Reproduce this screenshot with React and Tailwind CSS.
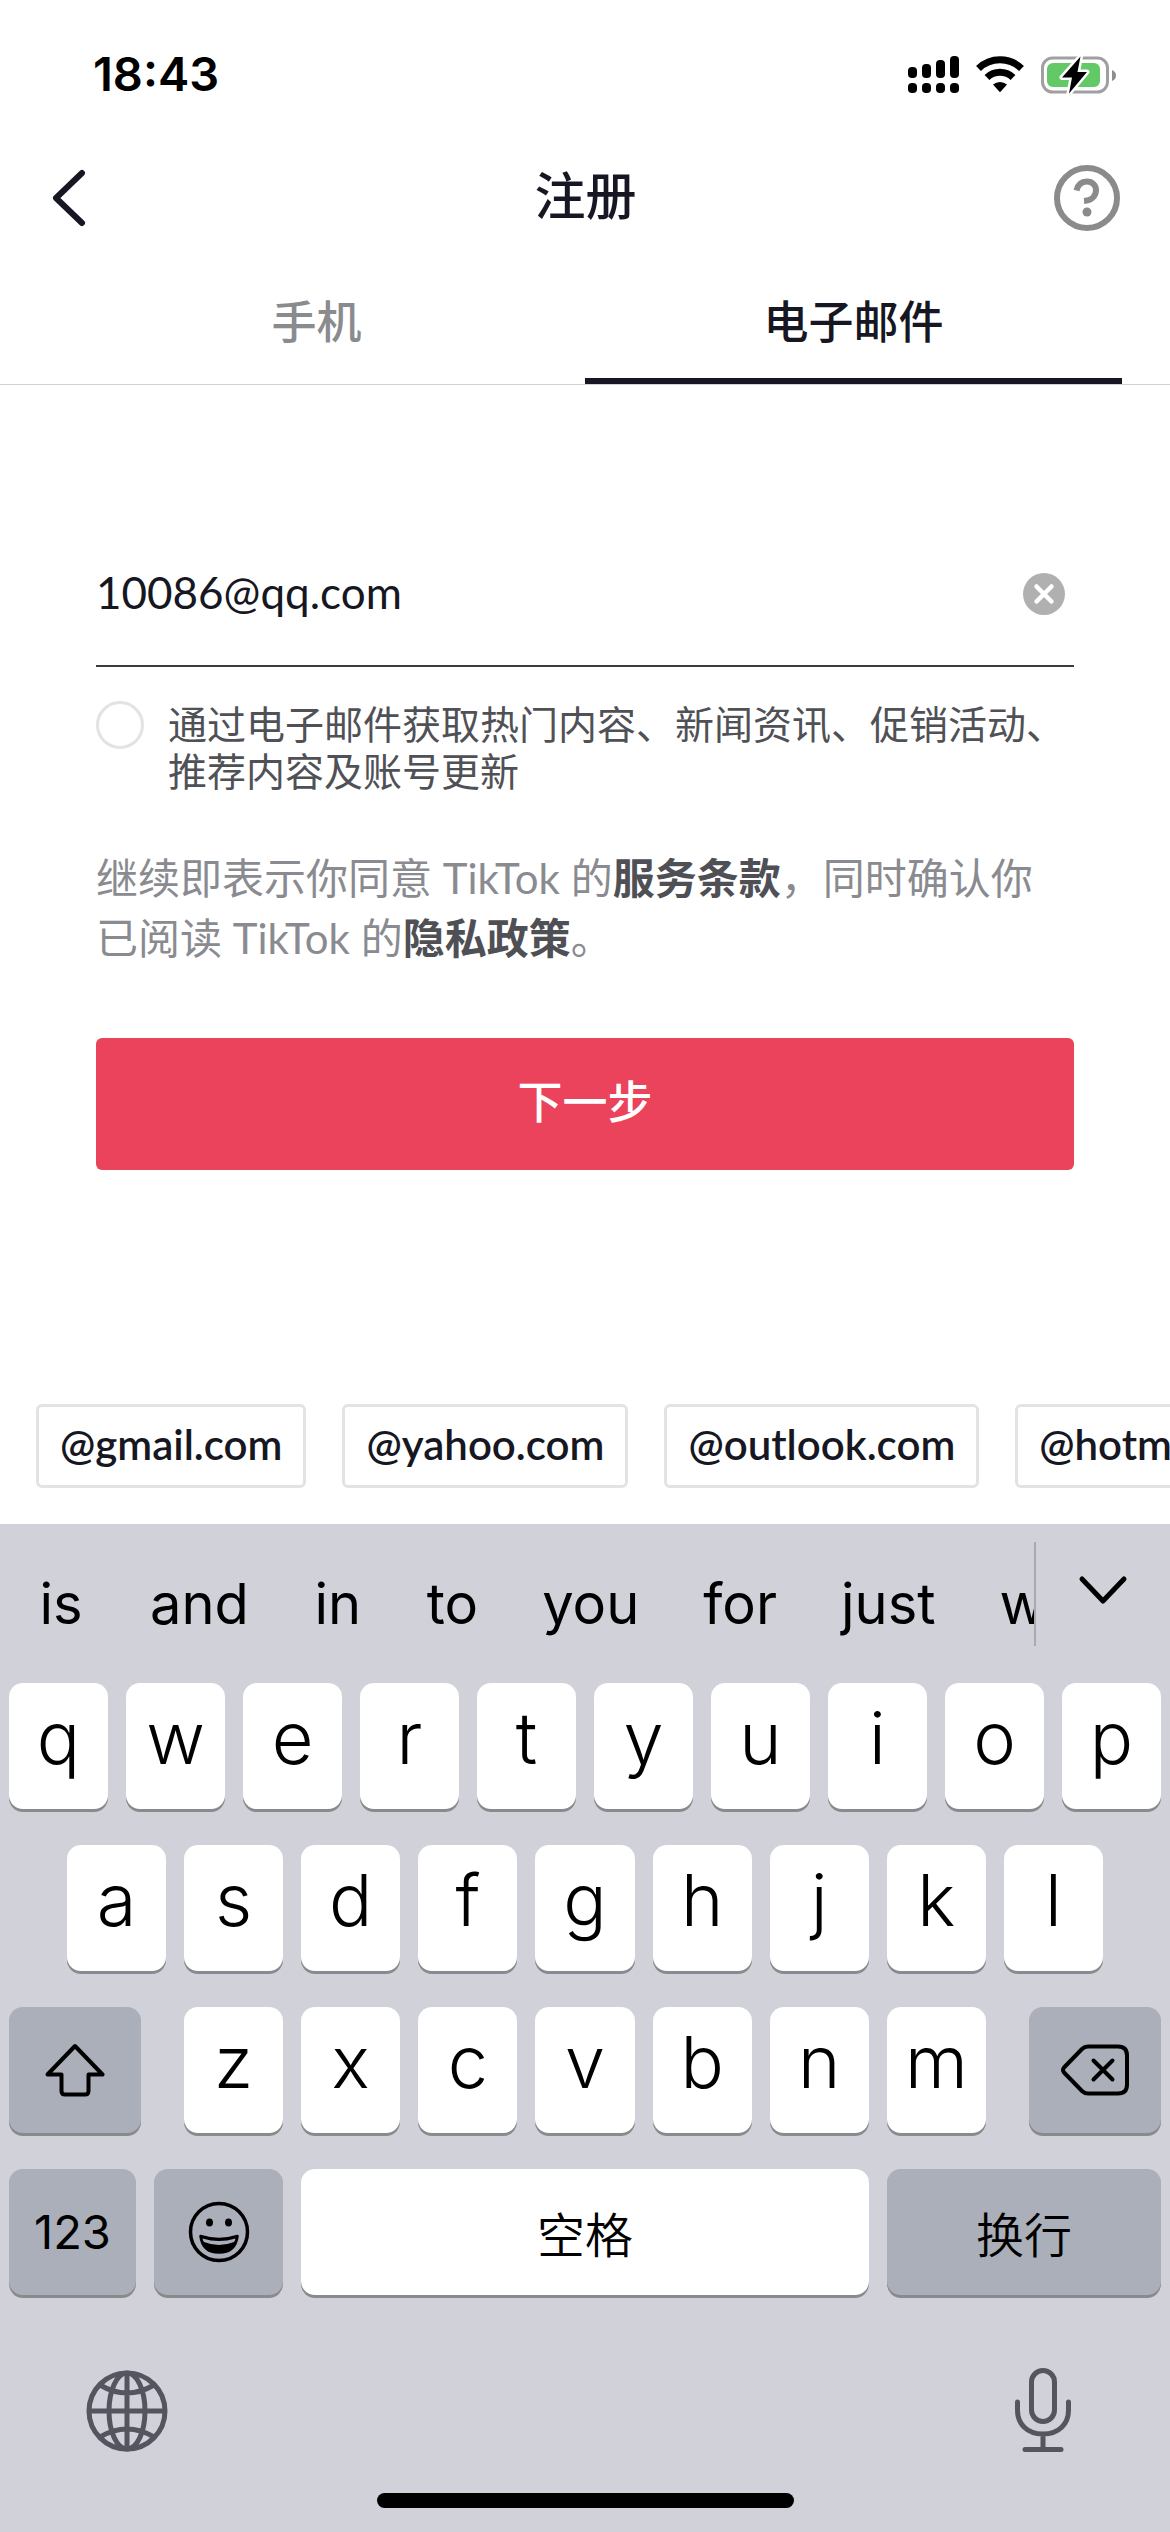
import { useState } from "react";

const SUGGESTIONS = ["is", "and", "in", "to", "you", "for", "just", "with"];
const DOMAINS = ["@gmail.com", "@yahoo.com", "@outlook.com", "@hotmail.com"];

function StatusBar() {
  return (
    <div className="flex h-[138px] items-center justify-between pt-3 pr-[53px] pl-[93px]">
      <span className="pb-[3px] font-['Inter',sans-serif] text-[47px] leading-none font-semibold text-black">18:43</span>
      <div className="flex items-center gap-[17px]">
        <svg className="h-[38px] w-[51px]" viewBox="0 0 51 38" aria-hidden="true">
          <rect x="0" y="11" width="9" height="11" rx="4" />
          <rect x="14" y="8" width="9" height="14" rx="4" />
          <rect x="28" y="4" width="9" height="18" rx="4" />
          <rect x="42" y="0" width="9" height="22" rx="4" />
          <rect x="0" y="27" width="9" height="10" rx="4" />
          <rect x="14" y="27" width="9" height="10" rx="4" />
          <rect x="28" y="27" width="9" height="10" rx="4" />
          <rect x="42" y="27" width="9" height="10" rx="4" />
        </svg>
        <svg className="h-[38px] w-[48px]" viewBox="0 0 48 38" aria-hidden="true">
          <g fill="none" stroke="#000" strokeWidth="7">
            <path d="M2.500 12.500 A31 31 0 0 1 45.500 12.500" />
            <path d="M11 21.500 A19 19 0 0 1 37 21.500" />
          </g>
          <path d="M17 28.500 A11 11 0 0 1 31 28.500 L24.800 35.500 Q24 36.300 23.200 35.500 Z" />
        </svg>
        <svg className="h-[38px] w-[76px]" viewBox="0 0 76 38" aria-hidden="true">
          <rect x="1.500" y="2" width="65" height="34" rx="10" fill="none" stroke="#a0a0a3" strokeWidth="3" />
          <path d="M71 14 Q75 15.500 75 19.500 Q75 23.500 71 25 Z" fill="#8e8e92" />
          <rect x="6" y="7" width="53" height="24" rx="6" fill="#62c966" />
          <path d="M39.500 0.500 L21 21.500 H31 L28 37.500 L46 16 H36.500 Z" fill="#000" stroke="#fff" strokeWidth="5" strokeLinejoin="round" paintOrder="stroke" />
        </svg>
      </div>
    </div>
  );
}

function Header() {
  return (
    <header className="flex h-[120px] items-center justify-between pr-[50px] pl-[51px]">
      <button type="button" aria-label="返回" className="flex w-[66px] items-center">
        <svg className="h-[58px] w-[36px]" viewBox="0 0 36 58" fill="none" stroke="#161722" strokeWidth="6" strokeLinecap="round" strokeLinejoin="round">
          <path d="M31 4 L5 29 L31 54" />
        </svg>
      </button>
      <h1 className="pb-[5px] text-[51px] leading-none font-medium">注册</h1>
      <button type="button" aria-label="帮助">
        <svg className="h-[66px] w-[66px]" viewBox="0 0 66 66" fill="none" stroke="#8a8b8d" strokeWidth="6">
          <circle cx="33" cy="33" r="30" />
          <path d="M22.500 25.500 C24 18.500 28.500 16.500 33 16.500 C38.500 16.500 42 20.500 42 25 C42 31 37.500 35.500 30 36 " />
          <circle cx="33" cy="47" r="4.500" fill="#8a8b8d" stroke="none" />
        </svg>
      </button>
    </header>
  );
}

function Tabs() {
  const base = "flex h-[126px] flex-1 items-center justify-center border-b-[6px] pt-2 text-[45px] leading-none font-medium";
  return (
    <div role="tablist" className="flex border-b border-[#d0d1d3] px-12">
      <button type="button" role="tab" aria-selected="false" className={base + " border-transparent text-[#8a8b8e]"}>手机</button>
      <button type="button" role="tab" aria-selected="true" className={base + " border-[#161722]"}>电子邮件</button>
    </div>
  );
}

function SignUpForm() {
  const [email, setEmail] = useState("10086@qq.com");
  return (
    <form className="px-24 pt-[138px]" onSubmit={(e) => e.preventDefault()}>
      <div className="flex h-[144px] items-center border-b-2 border-[#3b3c40] pr-2">
        <input
          type="text"
          aria-label="电子邮件"
          value={email}
          onChange={(e) => setEmail(e.target.value)}
          className="min-w-0 flex-1 bg-transparent pb-1 text-[44px] outline-none"
        />
        <button type="button" aria-label="清除" onClick={() => setEmail("")}>
          <svg className="h-[44px] w-[44px]" viewBox="0 0 44 44">
            <circle cx="22" cy="22" r="21" fill="#b0b0b1" />
            <path d="M14.500 14.500 L29.500 29.500 M29.500 14.500 L14.500 29.500" stroke="#fff" strokeWidth="4.500" strokeLinecap="round" />
          </svg>
        </button>
      </div>
      <label className="mt-[34px] flex items-start gap-6 text-[39px] leading-[47px] text-[#505156]">
        <input type="checkbox" className="size-12 shrink-0 appearance-none rounded-full border-[3px] border-[#e3e3e4] checked:bg-[#ea435b]" />
        <span>通过电子邮件获取热门内容、新闻资讯、促销活动、推荐内容及账号更新</span>
      </label>
      <p className="mt-[53px] pr-2 text-[42px] leading-[60px] text-[#8a8b90]">
        继续即表示你同意 TikTok 的<a href="#terms" className="font-bold text-[#4f5055]">服务条款</a>，同时确认你<br />
        已阅读 TikTok 的<a href="#privacy" className="font-bold text-[#4f5055]">隐私政策</a>。
      </p>
      <button type="submit" className="mt-[70px] h-[132px] w-full rounded-md bg-[#ea435b] pb-[2px] text-[45px] font-medium text-white">下一步</button>
    </form>
  );
}

function DomainChips() {
  return (
    <div className="mt-auto flex gap-9 overflow-hidden pb-9 pl-9">
      {DOMAINS.map((d) => (
        <button key={d} type="button" className="h-[84px] shrink-0 rounded-md border-[3px] border-[#e3e3e4] px-[21px] pb-1 text-[42px] font-semibold">{d}</button>
      ))}
    </div>
  );
}

function Key({ className, children, ...rest }) {
  return (
    <button type="button" className={"flex h-[126px] items-center justify-center rounded-[14px] shadow-[0_3px_0_#898a8e] " + className} {...rest}>
      {children}
    </button>
  );
}

function LetterKeys({ letters }) {
  return letters.split("").map((l) => (
    <Key key={l} className="flex-[99] bg-white pb-[16px] text-[72px] leading-none font-light">{l}</Key>
  ));
}

function Keyboard() {
  return (
    <section aria-label="键盘" className="bg-[#d0d1d9] pb-6 font-['Inter','Noto_Sans_CJK_SC',sans-serif] text-black">
      <div className="flex h-[159px] pt-[18px]">
        <div className="flex h-[104px] flex-1 items-center gap-16 overflow-hidden border-r-2 border-[#a9aab1] pt-5 pl-9">
          {SUGGESTIONS.map((w) => (
            <button key={w} type="button" className="min-w-[50px] shrink-0 text-[56px] leading-[72px]">{w}</button>
          ))}
        </div>
        <button type="button" aria-label="收起" className="flex h-[96px] w-[134px] items-center justify-center">
          <svg className="h-[30px] w-[50px]" viewBox="0 0 50 30" fill="none" stroke="#000" strokeWidth="5" strokeLinecap="round" strokeLinejoin="round">
            <path d="M4 4 L25 26 L46 4" />
          </svg>
        </button>
      </div>
      <div className="flex flex-col gap-9 px-[9px]">
        <div className="flex gap-[18px]"><LetterKeys letters="qwertyuiop" /></div>
        <div className="flex gap-[18px] px-[58px]"><LetterKeys letters="asdfghjkl" /></div>
        <div className="flex gap-[43px]">
          <Key aria-label="大写" className="flex-[132] bg-[#abafba]">
            <svg className="h-[54px] w-[60px]" viewBox="0 0 60 54" fill="none" stroke="#000" strokeWidth="4" strokeLinejoin="round">
              <path d="M30 3 L57.500 31.500 H43.500 V48 Q43.500 51.500 40 51.500 H20 Q16.500 51.500 16.500 48 V31.500 H2.500 Z" />
            </svg>
          </Key>
          <div className="flex flex-[802] gap-[18px]"><LetterKeys letters="zxcvbnm" /></div>
          <Key aria-label="删除" className="flex-[132] bg-[#abafba]">
            <svg className="h-[52px] w-[70px]" viewBox="0 0 70 52" fill="none" stroke="#000" strokeWidth="4" strokeLinecap="round" strokeLinejoin="round">
              <path d="M28 2.500 H58 Q67 2.500 67 11.500 V40.500 Q67 49.500 58 49.500 H28 Q24.500 49.500 22 47 L4 28.500 Q2 26 4 23.500 L22 5 Q24.500 2.500 28 2.500 Z" />
              <path d="M33.500 16.500 L52.500 35.500 M52.500 16.500 L33.500 35.500" />
            </svg>
          </Key>
        </div>
        <div className="flex gap-[18px]">
          <Key className="flex-[127] bg-[#abafba] text-[47px]">123</Key>
          <Key aria-label="表情" className="flex-[129] bg-[#abafba]">
            <svg className="h-[62px] w-[62px]" viewBox="0 0 62 62">
              <circle cx="31" cy="31" r="28.500" fill="none" stroke="#000" strokeWidth="3.500" />
              <ellipse cx="21.500" cy="21.500" rx="3.500" ry="4" />
              <ellipse cx="40.500" cy="21.500" rx="3.500" ry="4" />
              <path d="M12.500 35 Q31 41 49.500 35 Q47.500 51.500 31 51.500 Q14.500 51.500 12.500 35 Z" stroke="#000" strokeWidth="2.500" strokeLinejoin="round" />
              <path d="M14.500 37.500 Q31 42.500 47.500 37.500 Q47 39.500 46 41 Q31 47 16 41 Q15 39.500 14.500 37.500 Z" fill="#abafba" />
            </svg>
          </Key>
          <Key className="flex-[568] bg-white pt-[8px] text-[48px] font-[350]">空格</Key>
          <Key className="flex-[274] bg-[#abafba] pt-[8px] text-[48px] font-[350]">换行</Key>
        </div>
      </div>
      <div className="mt-[69px] flex h-[94px] items-center justify-between pr-[97px] pl-[86px]">
        <button type="button" aria-label="切换键盘">
          <svg className="h-[82px] w-[82px]" viewBox="0 0 82 82" fill="none" stroke="#54555f" strokeWidth="5">
            <circle cx="41" cy="41" r="38" />
            <ellipse cx="41" cy="41" rx="18" ry="38" />
            <path d="M41 3 V79 M3 41 H79 M14 15 Q41 31 68 15 M14 67 Q41 51 68 67" />
          </svg>
        </button>
        <button type="button" aria-label="听写">
          <svg className="h-[86px] w-[60px]" viewBox="0 0 60 86" fill="none" stroke="#54555f" strokeWidth="5" strokeLinecap="round">
            <rect x="18.500" y="2.500" width="23" height="51" rx="11.500" />
            <path d="M4.500 34 V42 C4.500 56 14 66 30 66 C46 66 55.500 56 55.500 42 V34 M30 66 V81.500 M12 81.500 H48" />
          </svg>
        </button>
      </div>
      <div className="mx-auto mt-[35px] h-[15px] w-[417px] rounded-full bg-black" />
    </section>
  );
}

export default function App() {
  return (
    <main className="flex min-h-screen flex-col overflow-hidden bg-white font-['Lato','Noto_Sans_CJK_SC',sans-serif] text-[#161722]" lang="zh-CN">
      <StatusBar />
      <Header />
      <Tabs />
      <SignUpForm />
      <DomainChips />
      <Keyboard />
    </main>
  );
}
